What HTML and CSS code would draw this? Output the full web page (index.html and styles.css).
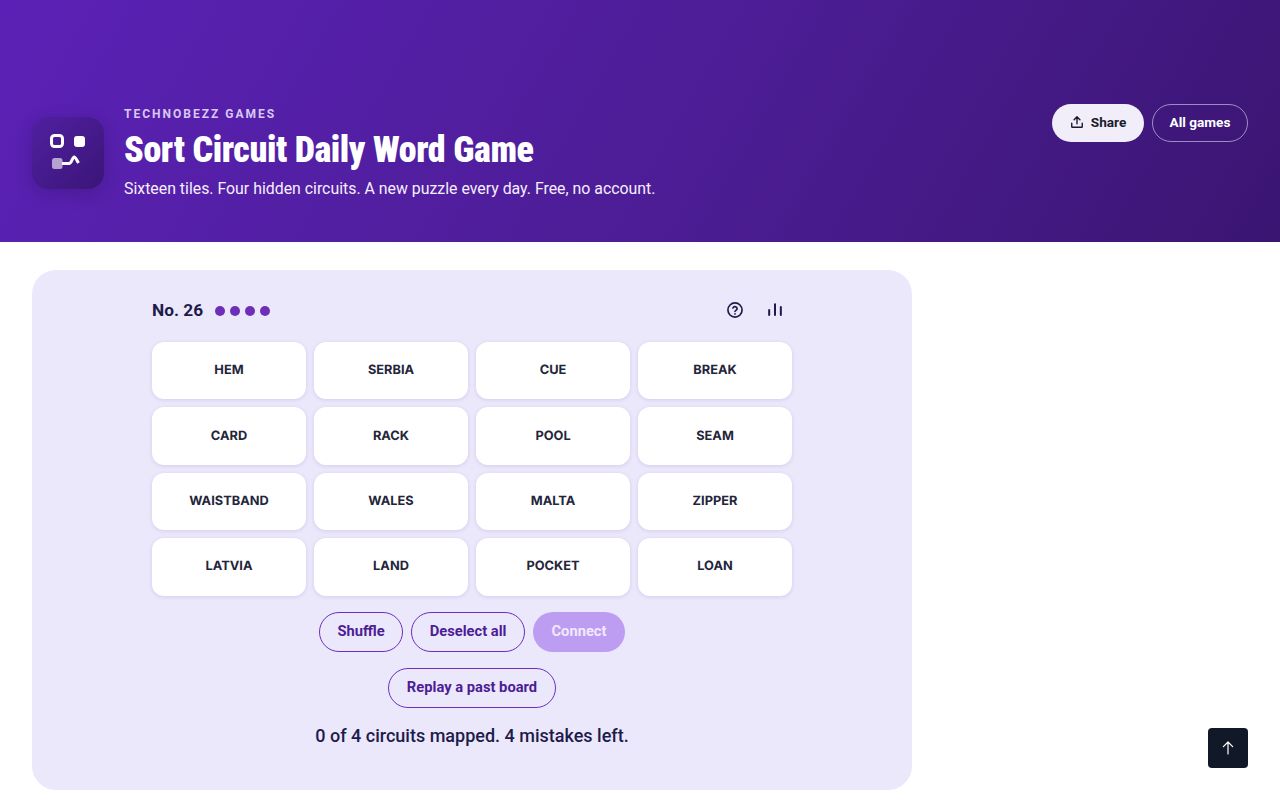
FILE: index.html
```html
<!DOCTYPE html>
<html lang="en">
<head>
    <meta charset="UTF-8">
    <meta name="viewport" content="width=device-width, initial-scale=1.0">
    <title>Sort Circuit Daily Word Game</title>
    <link rel="stylesheet" href="styles.css">
</head>
<body>
    <header class="hero">
        <div class="hero-main">
            <div class="logo">
                <svg width="72" height="72" viewBox="0 0 72 72" fill="none">
                    <rect x="19.500" y="18.500" width="11" height="11" rx="3" stroke="#fff" stroke-width="3"/>
                    <rect x="42" y="19" width="11" height="11" rx="3" fill="#fff"/>
                    <rect x="20" y="41" width="10.500" height="11" rx="2.500" fill="#fff" opacity="0.6"/>
                    <path d="M30 46.500h7c2.500 0 3-5.500 5-6.500 1.500 0 3 3.500 4.500 6" stroke="#fff" stroke-width="3"/>
                </svg>
            </div>
            <div class="hero-text">
                <div class="eyebrow">TECHNOBEZZ GAMES</div>
                <h1>Sort Circuit Daily Word Game</h1>
                <p>Sixteen tiles. Four hidden circuits. A new puzzle every day. Free, no account.</p>
            </div>
        </div>
        <div class="hero-actions">
            <button class="btn-share">
                <svg width="14" height="14" viewBox="0 0 24 24" fill="none" stroke="#1a1a2e" stroke-width="2.400" stroke-linecap="round" stroke-linejoin="round">
                    <path d="M12 15V3M7 8l5-5 5 5M3 14v6a1 1 0 0 0 1 1h16a1 1 0 0 0 1-1v-6"/>
                </svg>
                Share
            </button>
            <button class="btn-games">All games</button>
        </div>
    </header>

    <main class="page">
        <section class="game-card">
            <div class="board">
                <div class="board-top">
                    <div class="board-no">
                        <span>No. 26</span>
                        <div class="dots"><i></i><i></i><i></i><i></i></div>
                    </div>
                    <div class="board-icons">
                        <svg width="20" height="20" viewBox="0 0 24 24" fill="none" stroke="#1e1b4b" stroke-width="2" stroke-linecap="round" stroke-linejoin="round">
                            <circle cx="12" cy="12" r="8.500"/>
                            <path d="M9.500 9.600a2.600 2.600 0 0 1 5 .8c0 1.700-2.500 2.200-2.500 3.400M12 16.600v.1"/>
                        </svg>
                        <svg width="20" height="20" viewBox="0 0 24 24" fill="none" stroke="#1e1b4b" stroke-width="2.400" stroke-linecap="round">
                            <path d="M5 18v-6M12 18V5M19 18V8.500"/>
                        </svg>
                    </div>
                </div>
                <div class="tiles">
                    <button class="tile">HEM</button>
                    <button class="tile">SERBIA</button>
                    <button class="tile">CUE</button>
                    <button class="tile">BREAK</button>
                    <button class="tile">CARD</button>
                    <button class="tile">RACK</button>
                    <button class="tile">POOL</button>
                    <button class="tile">SEAM</button>
                    <button class="tile">WAISTBAND</button>
                    <button class="tile">WALES</button>
                    <button class="tile">MALTA</button>
                    <button class="tile">ZIPPER</button>
                    <button class="tile">LATVIA</button>
                    <button class="tile">LAND</button>
                    <button class="tile">POCKET</button>
                    <button class="tile">LOAN</button>
                </div>
                <div class="controls">
                    <button class="btn-outline btn-shuffle">Shuffle</button>
                    <button class="btn-outline">Deselect all</button>
                    <button class="btn-connect" disabled>Connect</button>
                </div>
                <div class="controls replay">
                    <button class="btn-outline">Replay a past board</button>
                </div>
                <p class="status">0 of 4 circuits mapped. 4 mistakes left.</p>
            </div>
        </section>
    </main>

    <button class="to-top" aria-label="Back to top">
        <svg width="16" height="16" viewBox="0 0 24 24" fill="none" stroke="#fff" stroke-width="1.800" stroke-linecap="round" stroke-linejoin="round">
            <path d="M12 21V3M5 10l7-7 7 7"/>
        </svg>
    </button>
</body>
</html>
```

FILE: styles.css
```css
body {
    margin: 0;
    font-family: Roboto, "Liberation Sans", sans-serif;
    background-color: white;
    color: #1e1b4b;
}
button {
    font-family: inherit;
    cursor: pointer;
}

/* Header */
.hero {
    height: 242px;
    box-sizing: border-box;
    padding: 104px 32px 0;
    display: flex;
    justify-content: space-between;
    align-items: flex-start;
    background: linear-gradient(120deg, #5b21b6 0%, #4c1d95 55%, #3b1572 100%);
}
.hero-main {
    display: flex;
    align-items: center;
    gap: 20px;
}
.logo {
    width: 72px;
    height: 72px;
    margin-top: 1px;
    border-radius: 16px;
    background: linear-gradient(135deg, #5020a0, #3b1578);
    box-shadow: 0 4px 16px rgba(30, 10, 70, 0.25);
}
.eyebrow {
    font-size: 12px;
    line-height: 20px;
    font-weight: 700;
    letter-spacing: 2px;
    color: #d9c8f5;
}
h1 {
    margin: 4px 0 5px;
    font-size: 36px;
    line-height: 44px;
    font-weight: 900;
    font-stretch: 75%;
    letter-spacing: -0.400px;
    color: white;
}
.hero-text p {
    margin: 0;
    font-size: 15.870px;
    line-height: 24px;
    color: #f5f0fd;
}
.hero-actions {
    display: flex;
    gap: 8px;
}
.btn-share, .btn-games {
    height: 38px;
    padding: 0 0 2px;
    border-radius: 19px;
    font-size: 13.600px;
    font-weight: 700;
}
.btn-share {
    width: 92px;
    display: flex;
    align-items: center;
    justify-content: center;
    gap: 7px;
    border: none;
    background: #f1edf9;
    color: #1a1a2e;
}
.btn-games {
    width: 96px;
    background: transparent;
    border: 1px solid rgba(255, 255, 255, 0.5);
    color: white;
}

/* Game */
.page {
    padding: 28px 32px 10px;
}
.game-card {
    width: 880px;
    height: 520px;
    box-sizing: border-box;
    padding: 24px 120px;
    border-radius: 24px;
    background-color: #ece8fb;
}
.board-top {
    height: 32px;
    margin-bottom: 16px;
    display: flex;
    justify-content: space-between;
    align-items: center;
}
.board-no {
    display: flex;
    align-items: center;
    gap: 12px;
    font-size: 17.280px;
    font-weight: 700;
}
.dots {
    display: flex;
    gap: 5px;
    margin-top: 2px;
}
.dots i {
    width: 10px;
    height: 10px;
    border-radius: 50%;
    background-color: #6d2fb8;
}
.board-icons {
    display: flex;
    gap: 20px;
    padding-right: 7px;
}
.tiles {
    display: grid;
    grid-template-columns: repeat(4, 1fr);
    grid-auto-rows: 57.400px;
    gap: 8px;
}
.tile {
    padding: 0;
    border: none;
    border-radius: 12px;
    background: white;
    box-shadow: 0 1px 4px rgba(76, 29, 149, 0.14);
    font-family: Inter, sans-serif;
    font-size: 12.800px;
    font-weight: 700;
    text-rendering: geometricPrecision;
    color: #23253a;
}
.controls {
    display: flex;
    justify-content: center;
    gap: 8px;
    margin-top: 16px;
}
.btn-outline, .btn-connect {
    height: 40px;
    padding: 0 18px 2px;
    border-radius: 20px;
    font-size: 14.720px;
    font-weight: 700;
}
.btn-outline {
    border: 1px solid #6d2fb8;
    background: transparent;
    color: #4c1d95;
}
.btn-shuffle {
    padding: 0 17px 2px;
}
.btn-connect {
    border: none;
    background-color: #bd9df2;
    color: #f1e8fd;
    cursor: not-allowed;
}
.status {
    margin: 15px 0 0;
    text-align: center;
    font-size: 18px;
    line-height: 26px;
    font-weight: 500;
}

.to-top {
    position: fixed;
    right: 32px;
    bottom: 32px;
    width: 40px;
    height: 40px;
    padding: 0;
    border: none;
    border-radius: 4px;
    background-color: #111827;
    display: flex;
    align-items: center;
    justify-content: center;
}
```
